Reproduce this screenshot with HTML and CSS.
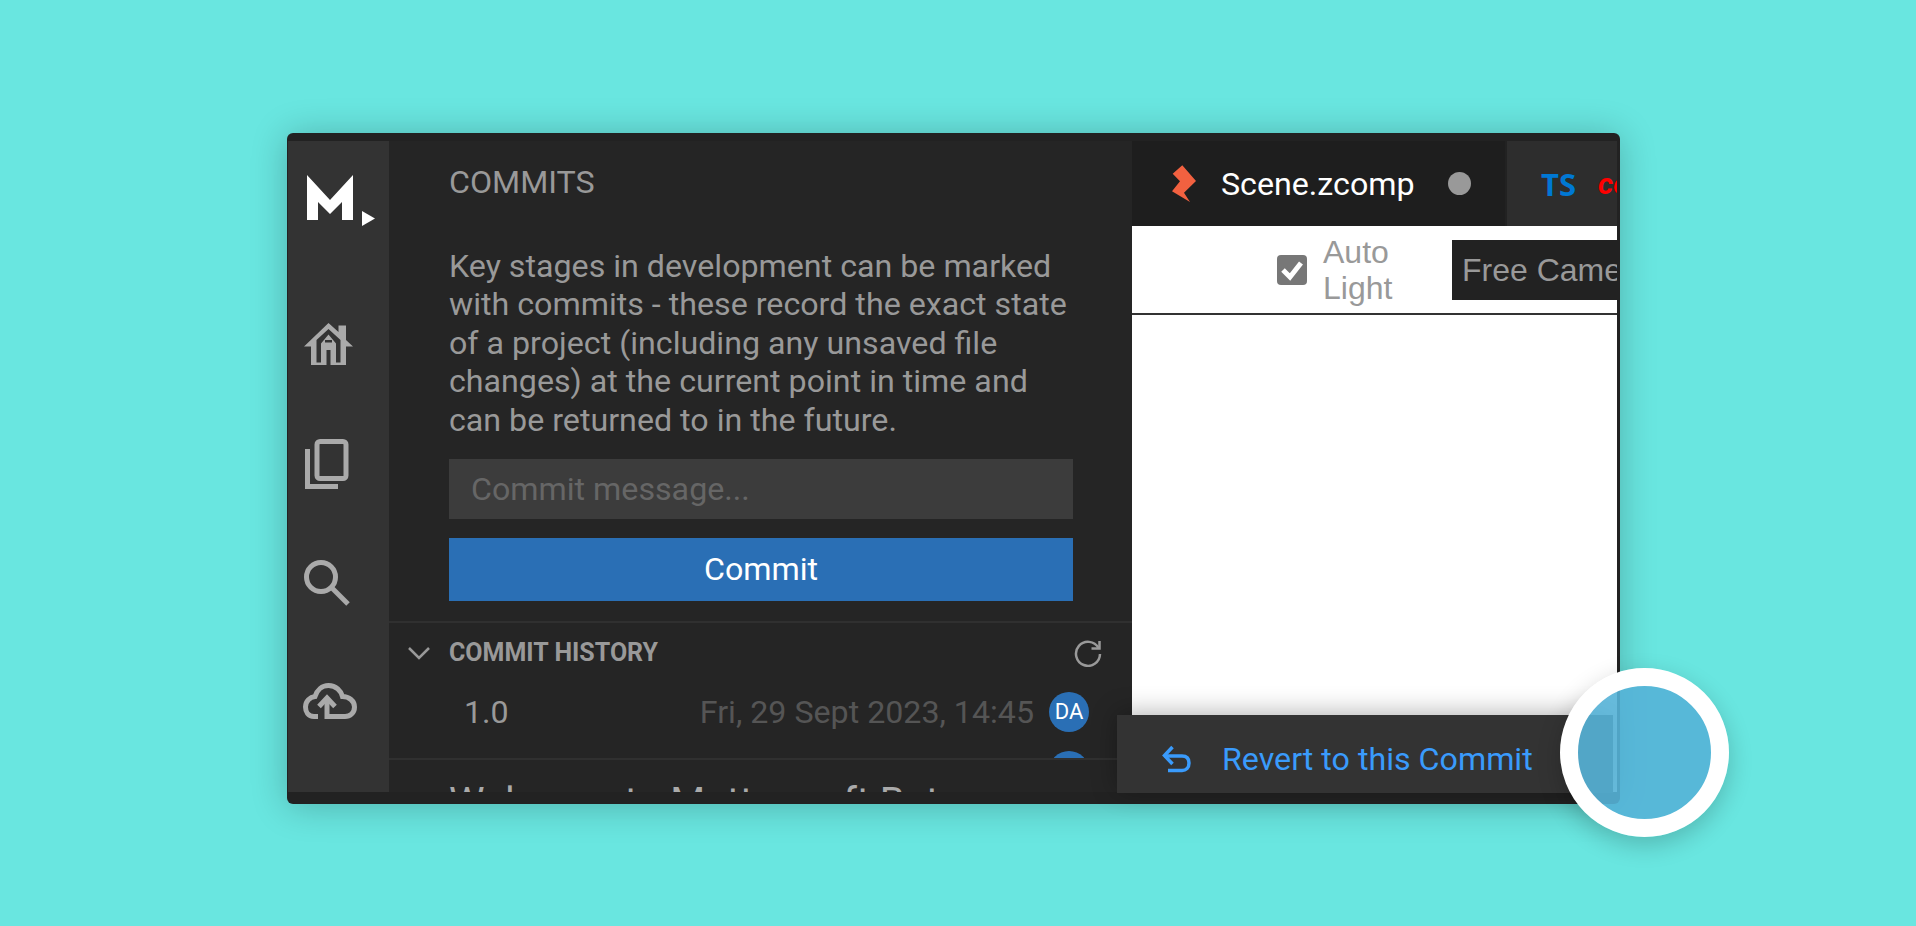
FILE: index.html
```html
<!DOCTYPE html>
<html lang="en">
<head>
<meta charset="utf-8">
<title>Commits</title>
<link rel="stylesheet" href="styles.css">
</head>
<body>
<div class="stage">
  <div class="window">
    <nav class="rail">
      <div class="logo">
        <svg width="70" height="52" viewBox="0 0 70 52"><path class="white" d="M0 0 L23 25 L46 0 V45 H35 V27 L23 39 L11 27 V45 H0 Z"/><path class="white" d="M55 36 L68 43.500 L55 51 Z"/></svg>
      </div>
      <div class="rail-item wide">
        <svg width="50" height="44" viewBox="0 0 50 44"><path class="solid" fill-rule="evenodd" d="M24.500 0 L34.500 9 V2.500 H42 V17 L49 23.500 H42 V42 H7 V23.500 H0 Z M24.500 6 L36.500 17 V39.500 H32 V20.500 L24.500 11.500 L17 20.500 V39.500 H12.500 V17 Z M21 17 H28 V19.500 H21 Z M22.500 27 H26.500 V42 H22.500 Z"/></svg>
      </div>
      <div class="rail-item">
        <svg width="44" height="50" viewBox="0 0 44 50"><rect class="ln" x="12" y="2.500" width="29" height="37" rx="3"/><path class="ln" d="M2.500 10 V47.500 H33"/></svg>
      </div>
      <div class="rail-item">
        <svg width="46" height="46" viewBox="0 0 46 46"><circle class="ln" cx="17" cy="17" r="14.500"/><path class="ln" d="M27 27 L44 44"/></svg>
      </div>
      <div class="rail-item wide">
        <svg width="57" height="37" viewBox="-3 0 57 37"><path class="ln" d="M15 33.500 H11 C5 33.500 2.500 28.500 2.500 24 C2.500 18 7 14 12 13.500 C14 7 19 2.500 25.500 2.500 C33 2.500 38 8 39.500 13.500 C46 13.500 51.500 18 51.500 24 C51.500 30 47 33.500 42 33.500 H24 V15"/><path class="ln" d="M16 23.500 L24 15 L32 23.500"/></svg>
      </div>
    </nav>

    <section class="panel">
      <div class="commits">
        <h2 class="commits-title">COMMITS</h2>
        <p class="commits-text">Key stages in development can be marked with commits - these record the exact state of a project (including any unsaved file changes) at the current point in time and can be returned to in the future.</p>
        <div class="commit-input">Commit message...</div>
        <div class="commit-button">Commit</div>
      </div>
      <div class="history">
        <div class="history-head">
          <svg class="chevron" width="24" height="14" viewBox="0 0 24 14"><path class="ln-thin" d="M2 2 L12 12 L22 2"/></svg>
          <span class="history-title">COMMIT HISTORY</span>
          <svg class="refresh" width="28" height="28" viewBox="0 0 28 28"><path class="ln-thin" d="M24.500 9 A12 12 0 1 0 26 15"/><path class="ln-thin" d="M25.500 2 V9.500 H17.500"/></svg>
        </div>
        <div class="history-row">
          <span class="version">1.0</span>
          <span class="date">Fri, 29 Sept 2023, 14:45</span>
          <span class="avatar">DA</span>
        </div>
        <div class="history-row">
          <span class="version"></span>
          <span class="date"></span>
          <span class="avatar">DA</span>
        </div>
      </div>
      <div class="welcome">Welcome to Mattercraft Beta</div>
    </section>

    <section class="editor">
      <div class="tabs">
        <div class="tab active">
          <svg width="26" height="38" viewBox="0 0 26 38"><path class="zap" d="M10.300 0.300 L24 16 L12 27.700 L18 37 L0 26.300 L8 16.300 L0.700 8.700 Z"/></svg>
          <span class="tab-name">Scene.zcomp</span>
          <span class="dot"></span>
        </div>
        <div class="tab second">
          <span class="ts">TS</span>
          <span class="tab-red">commit</span>
        </div>
      </div>
      <div class="toolbar">
        <span class="check">
          <svg width="30" height="30" viewBox="0 0 30 30"><path class="tick" d="M6 15 L13 22 L24 8"/></svg>
        </span>
        <span class="check-label">Auto<br>Light</span>
        <span class="select">Free Camera</span>
      </div>
      <div class="canvas"></div>
    </section>

    <div class="menu">
      <svg width="30" height="28" viewBox="0 0 30 28"><path class="ln-blue" d="M2.500 11 H20 C25 11 27 14 27 18 C27 23 24 25.500 20 25.500 H6"/><path class="ln-blue" d="M10.500 2 L2.500 10.500 L10.500 19"/></svg>
      <span class="menu-label">Revert to this Commit</span>
    </div>
  </div>
  <div class="pulse"></div>
</div>
</body>
</html>
```

FILE: styles.css
```css
* { box-sizing: border-box; }
html, body { margin: 0; height: 100%; }
body {
  background: #69e6e0;
  font-family: Roboto, "Liberation Sans", sans-serif;
  overflow: hidden;
}
.stage {
  position: relative;
  width: 100%;
  height: 926px;
  padding: 133px 0 0 287px;
}
.window {
  position: relative;
  width: 1333px;
  height: 671px;
  padding: 8px 3px 12px 1px;
  display: flex;
  background: #222;
  border-radius: 6px;
  box-shadow: 0 2px 36px rgba(0, 0, 0, .24);
}

/* rail */
.rail {
  width: 101px;
  flex: none;
  display: flex;
  flex-direction: column;
  align-items: center;
  background: #333;
}
.logo {
  height: 144px;
  width: 100%;
  padding: 34px 0 0 19px;
}
.rail-item {
  height: 119px;
  width: 100%;
  padding-right: 24px;
  display: flex;
  align-items: center;
  justify-content: center;
}
.wide { padding-right: 20px; }
svg { display: block; flex: none; }
.white { fill: #fff; }
.solid { fill: #aaa; }
.ln { fill: none; stroke: #aaa; stroke-width: 5; }
.ln-thin { fill: none; stroke: #999; stroke-width: 2.500; }
.ln-blue { fill: none; stroke: #3a9bfc; stroke-width: 3.500; }
.tick { fill: none; stroke: #fff; stroke-width: 5; }
.zap { fill: #f26140; }

/* panel */
.panel {
  width: 743px;
  flex: none;
  background: #252525;
  overflow: hidden;
  display: flex;
  flex-direction: column;
  color: #999;
}
.commits {
  height: 480px;
  padding: 0 49px 0 60px;
  flex: none;
}
.commits-title {
  margin: 0;
  padding-top: 22px;
  font-size: 32.200px;
  line-height: 38px;
  font-weight: 400;
}
.commits-text {
  margin: 46px 0 0;
  font-size: 32.200px;
  line-height: 38.400px;
  width: 624px;
}
.commit-input {
  height: 60px;
  margin-top: 20px;
  width: 624px;
  padding-left: 22px;
  background: #3c3c3c;
  color: #666;
  font-size: 32.200px;
  line-height: 60px;
}
.commit-button {
  height: 63px;
  margin-top: 19px;
  width: 624px;
  background: #2a6fb5;
  color: #fff;
  font-size: 32.200px;
  line-height: 63px;
  text-align: center;
}
.history {
  height: 139px;
  flex: none;
  overflow: hidden;
  border-top: 2px solid #303030;
  border-bottom: 2px solid #303030;
}
.history-head {
  height: 59px;
  padding: 0 30px 0 18px;
  display: flex;
  align-items: center;
}
.history-title {
  margin-left: 18px;
  flex: 1;
  font-size: 25px;
  font-weight: 700;
}
.history-row {
  height: 59px;
  padding: 0 43px 0 75px;
  display: flex;
  align-items: center;
  font-size: 32.200px;
}
.version { flex: none; }
.date {
  flex: 1;
  text-align: right;
  color: #555;
  margin-right: 15px;
}
.avatar {
  width: 40px;
  height: 40px;
  border-radius: 50%;
  background: #2a6fb5;
  color: #fff;
  font-size: 22px;
  line-height: 40px;
  text-align: center;
  flex: none;
}
.welcome {
  padding: 19px 0 0 60px;
  font-size: 40px;
  line-height: 48px;
  color: #aaa;
  white-space: nowrap;
}

/* editor */
.editor {
  flex: 1;
  min-width: 0;
  display: flex;
  flex-direction: column;
  overflow: hidden;
}
.tabs {
  height: 85px;
  flex: none;
  display: flex;
  background: #222;
}
.tab {
  display: flex;
  align-items: center;
  flex: none;
  overflow: hidden;
}
.active {
  width: 373px;
  padding-left: 40px;
  background: #1e1e1e;
}
.tab-name {
  margin-left: 23px;
  font-size: 32.200px;
  color: #fff;
  width: 227px;
}
.dot {
  width: 23px;
  height: 23px;
  border-radius: 50%;
  background: #999;
}
.second {
  flex: 1;
  min-width: 0;
  margin-left: 2px;
  padding-left: 34px;
  background: #2d2d2d;
}
.ts {
  font-family: "Open Sans", sans-serif;
  font-size: 31px;
  font-weight: 700;
  color: #0078d4;
}
.tab-red {
  margin-left: 22px;
  font-size: 30px;
  font-weight: 700;
  font-style: italic;
  color: #f00;
}
.toolbar {
  height: 89px;
  flex: none;
  display: flex;
  align-items: center;
  background: #fff;
  border-bottom: 2px solid #333;
  padding-left: 145px;
  font-family: "Liberation Sans", Arial, sans-serif;
  font-size: 32px;
  color: #999;
  white-space: nowrap;
  overflow: hidden;
}
.check {
  width: 30px;
  height: 30px;
  border-radius: 4px;
  background: #777;
  flex: none;
}
.check-label {
  margin-left: 16px;
  line-height: 36px;
  width: 129px;
  flex: none;
}
.select {
  height: 60px;
  line-height: 60px;
  padding-left: 10px;
  background: #222;
  flex: none;
  width: 260px;
  color: #999;
}
.canvas {
  flex: 1;
  background: #fff;
}

/* context menu */
.menu {
  position: absolute;
  left: 830px;
  top: 582px;
  width: 496px;
  height: 78px;
  padding: 9px 0 0 45px;
  display: flex;
  align-items: center;
  background: #333;
  box-shadow: 0 -2px 24px rgba(0, 0, 0, .3);
}
.menu-label {
  margin-left: 30px;
  font-size: 32.200px;
  color: #3a9bfc;
}

/* highlight */
.pulse {
  position: absolute;
  left: 1560px;
  top: 668px;
  width: 169px;
  height: 169px;
  border: 18px solid #fff;
  border-radius: 50%;
  background: rgba(85, 178, 215, .9);
  box-shadow: 0 8px 24px rgba(0, 0, 0, .2);
}
```
